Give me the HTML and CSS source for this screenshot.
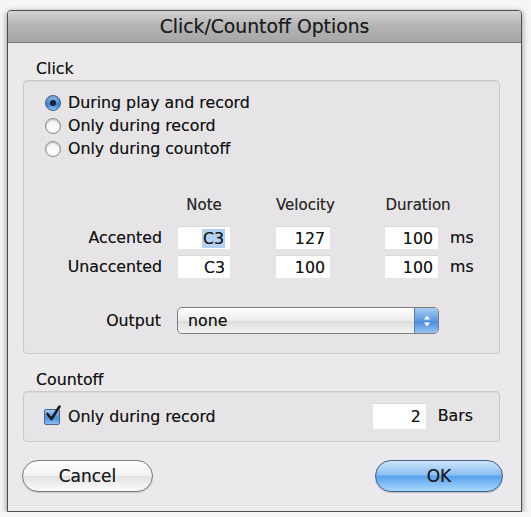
FILE: index.html
```html
<!DOCTYPE html>
<html lang="en">
<head>
  <meta charset="UTF-8">
  <title>Click/Countoff Options</title>
  <link rel="stylesheet" href="styles.css">
</head>
<body>
<div class="window">
  <div class="titlebar">Click/Countoff Options</div>

  <div class="content">
    <!-- Click section -->
    <div class="group-label">Click</div>
    <div class="group click-group">
      <div class="radios">
        <label class="radio-row"><span class="radio checked"></span>During play and record</label>
        <label class="radio-row"><span class="radio"></span>Only during record</label>
        <label class="radio-row"><span class="radio"></span>Only during countoff</label>
      </div>

      <div class="grid">
        <div></div>
        <div class="head head-note">Note</div>
        <div class="head head-vel">Velocity</div>
        <div class="head head-dur">Duration</div>
        <div></div>

        <div class="row-label">Accented</div>
        <div><span class="field f-note"><span class="sel">C3</span></span></div>
        <div><span class="field f-vel">127</span></div>
        <div><span class="field f-dur">100</span></div>
        <div class="unit">ms</div>

        <div class="row-label">Unaccented</div>
        <div><span class="field f-note">C3</span></div>
        <div><span class="field f-vel">100</span></div>
        <div><span class="field f-dur">100</span></div>
        <div class="unit">ms</div>
      </div>

      <div class="output-row">
        <div class="row-label">Output</div>
        <div class="popup">
          <span class="popup-text">none</span>
          <span class="popup-arrows">
            <svg width="10" height="16" viewBox="0 0 10 16">
              <path d="M2 6.5 L5 2.5 L8 6.5 Z" fill="#fff"/>
              <path d="M2 9.5 L5 13.5 L8 9.5 Z" fill="#fff"/>
            </svg>
          </span>
        </div>
      </div>
    </div>

    <!-- Countoff section -->
    <div class="group-label countoff-label">Countoff</div>
    <div class="group countoff-group">
      <label class="check-row">
        <span class="checkbox">
          <svg width="18" height="18" viewBox="0 0 18 18">
            <path d="M3.5 9 L7.5 14 L15.5 1.5" fill="none" stroke="#1a1a1a" stroke-width="2.6" stroke-linecap="round" stroke-linejoin="round"/>
          </svg>
        </span>
        Only during record
      </label>
      <div class="bars">
        <span class="field f-bars">2</span>
        <span class="unit">Bars</span>
      </div>
    </div>

    <div class="buttons">
      <button class="btn btn-cancel">Cancel</button>
      <button class="btn btn-ok">OK</button>
    </div>
  </div>
</div>
</body>
</html>
```

FILE: styles.css
```css
/* Classic Aqua style dialog */
body {
  margin: 0;
  padding: 10px 0 0 7px;
  background: #f6f6f6;
  font-family: "DejaVu Sans", "Liberation Sans", sans-serif;
  font-size: 15.8px;
  color: #141414;
  text-shadow: 0 0 0.5px rgba(0, 0, 0, 0.5);
}
.window {
  width: 515px;
  height: 502px;
  background: #ebe9ec;
  border: 1px solid #4e4e4e;
  border-radius: 4px 4px 0 0;
  box-shadow: 0 2px 6px rgba(0, 0, 0, 0.45);
  box-sizing: border-box;
  overflow: hidden;
}
.titlebar {
  height: 32px;
  line-height: 31px;
  text-align: center;
  font-size: 18.8px;
  color: #1e1e1e;
  background: linear-gradient(#d4d3d4, #b4b3b4 50%, #a7a6a7);
  border-bottom: 1px solid #7a7a7a;
  box-sizing: border-box;
}
.content {
  padding: 0 0 0 15px;
}
.group-label {
  margin: 14px 0 0 13px;
  height: 23px;
  line-height: 23px;
}
.countoff-label {
  margin-top: 14px;
}
.group {
  width: 477px;
  box-sizing: border-box;
  border: 1px solid #cbc9cc;
  border-radius: 4px;
  background: #e6e4e7;
  box-shadow: inset 0 1px 0 #d9d7da;
}
.click-group {
  height: 274px;
  padding-top: 10px;
}
.radios {
  display: flex;
  flex-direction: column;
  padding-left: 21px;
}
.radio-row {
  display: flex;
  align-items: center;
  height: 23px;
  gap: 7px;
}
.radio {
  width: 16px;
  height: 16px;
  border-radius: 50%;
  border: 1px solid #8a8a8a;
  background: linear-gradient(#f4f4f4, #ffffff);
  box-shadow: inset 0 1px 2px rgba(0, 0, 0, 0.25);
  box-sizing: border-box;
  flex: none;
}
.radio.checked {
  border-color: #3c5f8c;
  background: radial-gradient(circle at 50% 50%, #1b2636 0 2.8px, transparent 3.4px),
    linear-gradient(#9cc4ee, #3f83d6 60%, #8cc0f5);
}
.grid {
  display: grid;
  grid-template-columns: 154px 98px 109px 53px auto;
  grid-auto-rows: 29px;
  margin-top: 34px;
  align-items: center;
}
.grid .head {
  font-size: 15px;
  color: #2a2a2a;
  text-align: center;
  align-self: start;
  line-height: 22px;
}
.head-note { width: 52px; }
.head-vel { width: 54px; }
.head-dur { width: 66px; }
.row-label {
  text-align: right;
  padding-right: 16px;
}
.field {
  display: block;
  height: 23px;
  line-height: 23px;
  background: #fff;
  border-top: 1px solid #d8d8d8;
  text-align: right;
  padding-right: 5px;
  box-sizing: border-box;
}
.f-note { width: 52px; }
.f-vel { width: 54px; }
.f-dur { width: 53px; }
.sel {
  background: #b5d1f2;
  padding: 0 1px;
}
.unit {
  padding-left: 12px;
}
.output-row {
  display: flex;
  align-items: center;
  margin-top: 26px;
}
.output-row .row-label {
  width: 153px;
  box-sizing: border-box;
}
.popup {
  display: flex;
  width: 262px;
  height: 27px;
  box-sizing: border-box;
  border: 1px solid #7d7d7d;
  border-radius: 5px;
  background: linear-gradient(#ffffff, #ececec 50%, #dcdcdc 51%, #f4f4f4);
  overflow: hidden;
}
.popup-text {
  flex: 1;
  padding-left: 10px;
  line-height: 25px;
}
.popup-arrows {
  width: 23px;
  display: flex;
  align-items: center;
  justify-content: center;
  border-left: 1px solid #5b7fb0;
  background: linear-gradient(#a9cdf3, #5d9ae0 50%, #4a8ad8 51%, #93c3f3);
}
.countoff-group {
  height: 51px;
  display: flex;
  align-items: center;
  justify-content: space-between;
  padding: 0 26px 0 20px;
}
.check-row {
  display: flex;
  align-items: center;
  gap: 8px;
}
.checkbox {
  position: relative;
  width: 16px;
  height: 16px;
  border: 1px solid #45688f;
  border-radius: 2px;
  background: linear-gradient(#a4c8ef, #4d8edb 55%, #8cbff2);
  box-sizing: border-box;
}
.checkbox svg {
  position: absolute;
  left: -1px;
  top: -5px;
}
.bars {
  display: flex;
  align-items: center;
  margin-top: -2px;
}
.f-bars {
  width: 53px;
  height: 26px;
  line-height: 26px;
}
.buttons {
  display: flex;
  justify-content: space-between;
  width: 480px;
  margin-top: 18px;
}
.btn {
  height: 32px;
  border-radius: 16px;
  font-family: inherit;
  font-size: 17px;
  color: #1a1a1a;
  text-shadow: 0 0 0.5px rgba(0, 0, 0, 0.5);
  padding: 0;
}
.btn-cancel {
  width: 131px;
  margin-left: -1px;
  border: 1px solid #7a7a7a;
  background: linear-gradient(#ffffff, #f2f2f2 50%, #e2e2e2 51%, #fbfbfb);
  box-shadow: 0 1px 1px rgba(0, 0, 0, 0.15);
}
.btn-ok {
  width: 128px;
  border: 1px solid #3d5f8e;
  background: linear-gradient(#cfe5fb, #8cc0f2 45%, #5aa2ec 52%, #a9d8fd);
  box-shadow: 0 1px 1px rgba(0, 0, 0, 0.2);
}
```
